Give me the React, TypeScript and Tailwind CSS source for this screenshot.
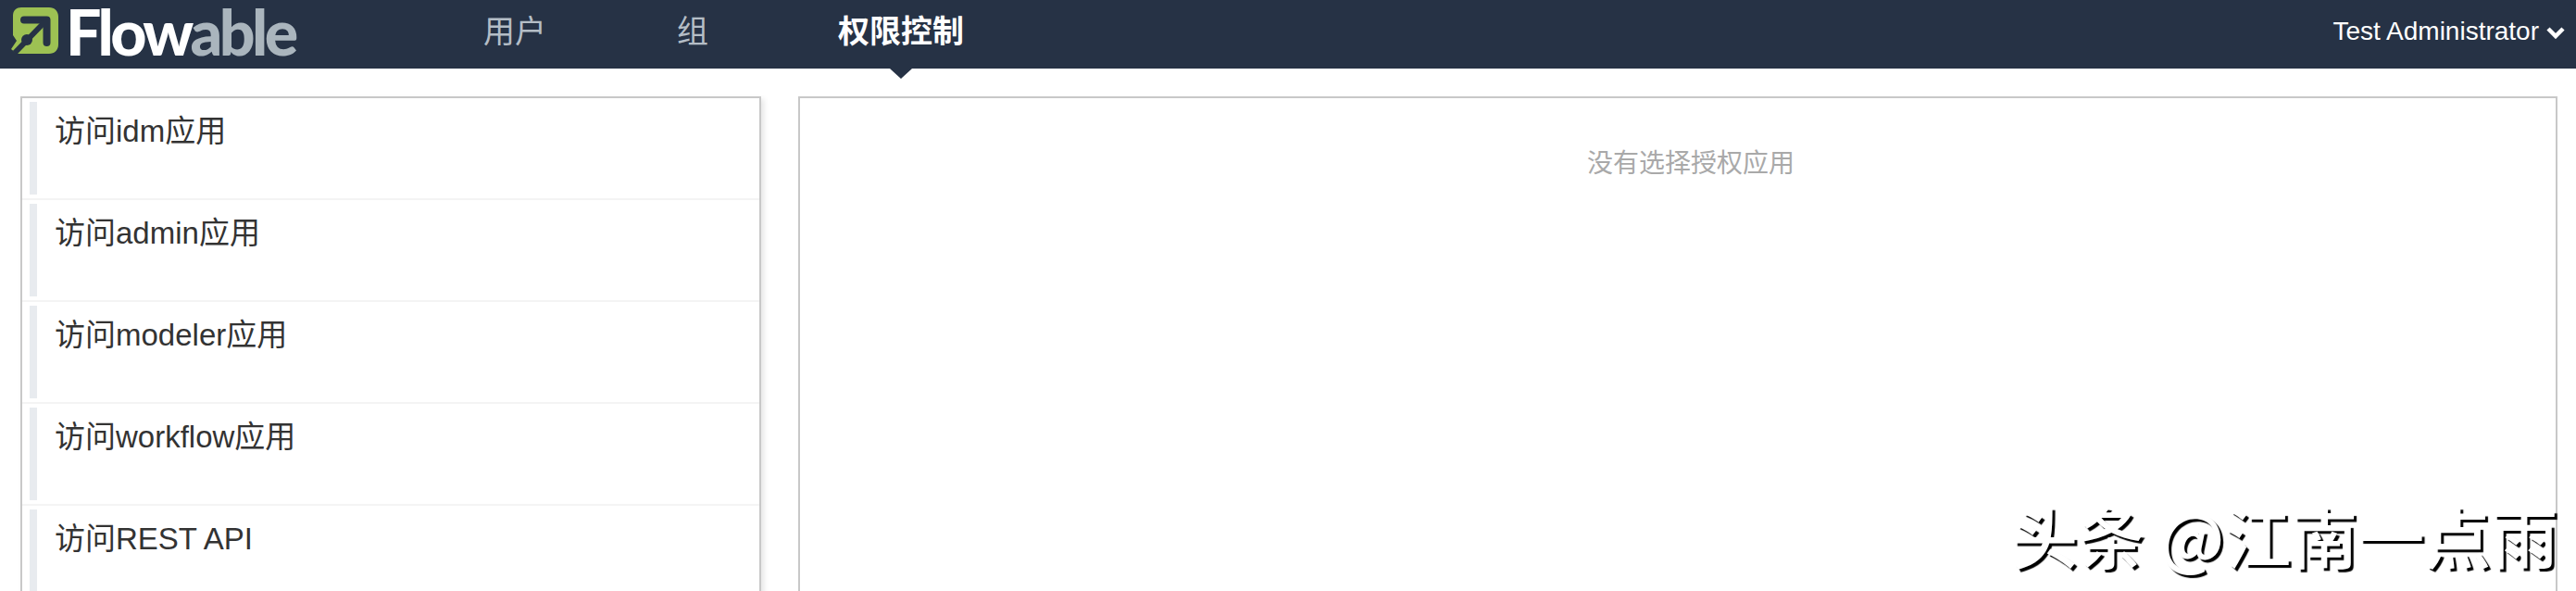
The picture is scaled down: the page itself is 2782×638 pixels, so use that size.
import React from "react";

const rows = ["访问idm应用", "访问admin应用", "访问modeler应用", "访问workflow应用", "访问REST API"];

const cjk = "font-['Liberation_Sans','Noto_Sans_CJK_SC',sans-serif]";

function LogoMark() {
  return (
    <svg width="54" height="54" viewBox="12 7 54 54" className="shrink-0">
      <path
        d="M23 8H53C59 8 63 12 63 18V48C63 54 59 58 53 58H18L12 53L18 44L14 38V17C14 11 18 8 23 8Z"
        fill="#9dc153"
      />
      <path d="M26 21.5H50.5V46" fill="none" stroke="#263245" strokeWidth="8" strokeLinecap="round" strokeLinejoin="round" />
      <path d="M48 24L16 57" fill="none" stroke="#263245" strokeWidth="6" />
      <circle cx="29" cy="43" r="6" fill="#263245" />
    </svg>
  );
}

const App: React.FC = () => {
  return (
    <div className={`relative h-screen overflow-hidden bg-white ${cjk}`}>
      {/* HEADER */}
      <header className="h-[74px] bg-[#263245] flex items-center pb-[6px]">
        <div className="flex items-center pl-[12px] w-[522px] shrink-0">
          <LogoMark />
          <span className="ml-[5px] font-['Lato',sans-serif] font-black text-[68px] leading-[80px] tracking-[-3.5px] text-white">
            Flow<span className="text-[#aab5bd]">able</span>
          </span>
        </div>

        <nav className="flex items-center text-[34px] leading-[40px] text-[#b4bdc6]">
          <span className="w-[209px]">用户</span>
          <span className="w-[174px]">组</span>
          <span className="relative font-bold text-white">
            权限控制
            <span className="absolute left-1/2 top-[60px] -ml-[12px] border-x-[12px] border-t-[11px] border-x-transparent border-t-[#263245]" />
          </span>
        </nav>

        <div className="ml-auto pr-[12px] flex items-center gap-[8px] text-[28px] leading-[36px] text-white">
          Test Administrator
          <svg width="20" height="16" viewBox="0 0 20 16">
            <path d="M2 5L10 13L18 5" fill="none" stroke="white" strokeWidth="4.5" />
          </svg>
        </div>
      </header>

      {/* CONTENT */}
      <div className="flex gap-[40px] pl-[22px] pr-[20px] pt-[30px]">
        <div className="w-[800px] h-[600px] shrink-0 border-2 border-[#c8c8c8] bg-white shadow-[3px_3px_6px_rgba(0,0,0,0.1)]">
          {rows.map((row) => (
            <div key={row} className="py-1 pl-2 border-b-2 border-[#f4f4f4]">
              <div className="h-[100px] border-l-8 border-[#e8ebef] pl-[19px] pt-[12px] text-[33px] leading-[40px] text-[#333333]">
                {row}
              </div>
            </div>
          ))}
        </div>

        <div className="flex-1 h-[600px] border-2 border-[#c8c8c8] bg-white pt-[51px] pl-[28px] text-center text-[28px] leading-[40px] text-[#a9a9a9]">
          没有选择授权应用
        </div>
      </div>

      {/* WATERMARK */}
      <div className="absolute left-[2172px] top-[535px] text-[72px] leading-[84px] whitespace-nowrap text-white [text-shadow:3px_3px_1px_#000] font-['Noto_Sans_CJK_SC',sans-serif] font-medium">
        头条 @江南一点雨
      </div>
    </div>
  );
};

export default App;
